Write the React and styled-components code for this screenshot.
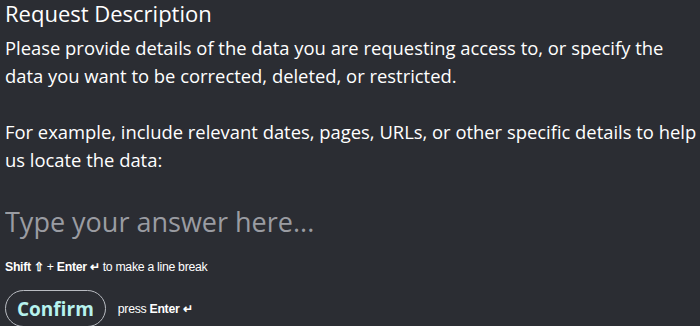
import React from 'react'
import styled, { createGlobalStyle } from 'styled-components'

const GlobalStyle = createGlobalStyle`
  html, body {
    margin: 0;
    padding: 0;
    background-color: #2b2d33;
  }
  body {
    font-family: "Open Sans", "Noto Sans", sans-serif;
    color: #ffffff;
  }
`

const Wrapper = styled.div`
  width: 700px;
  height: 326px;
  overflow: hidden;
  padding: 0 5px;
  box-sizing: border-box;
`

const Title = styled.h2`
  margin: 0;
  font-size: 22px;
  font-weight: 400;
  line-height: 26px;
`

const Description = styled.p`
  margin: 8px 0 0;
  font-size: 18.4px;
  line-height: 28px;
  white-space: nowrap;
`

const AnswerInput = styled.input`
  display: block;
  width: 100%;
  margin-top: 30px;
  padding: 0;
  border: none;
  background: transparent;
  outline: none;
  font-family: inherit;
  font-size: 27px;
  line-height: 36px;
  height: 36px;
  color: #fff;
  &::placeholder {
    color: #9a9ca2;
  }
`

const Hint = styled.div`
  margin-top: 20px;
  font-family: "Liberation Sans", Arial, sans-serif;
  font-size: 12.3px;
  line-height: 14px;
  letter-spacing: -0.3px;
  color: #ffffff;
  b {
    font-weight: 700;
  }
`

const Actions = styled.div`
  display: flex;
  align-items: center;
  gap: 12px;
  margin-top: 16px;
`

const ConfirmButton = styled.button`
  height: 37px;
  padding: 0 11px;
  border: 1px solid #b9bcc2;
  border-radius: 19px;
  background: transparent;
  color: #b6f2ee;
  font-family: "Open Sans", sans-serif;
  font-weight: 700;
  font-size: 19px;
  cursor: pointer;
`

const PressEnter = styled.span`
  font-family: "Liberation Sans", Arial, sans-serif;
  font-size: 12.3px;
  letter-spacing: -0.3px;
  b {
    font-weight: 700;
  }
`

const App = () => {
  return (
    <Wrapper>
      <GlobalStyle />
      <Title>Request Description</Title>
      <Description>
        Please provide details of the data you are requesting access to, or specify the
        <br />
        data you want to be corrected, deleted, or restricted.
        <br />
        <br />
        For example, include relevant dates, pages, URLs, or other specific details to help
        <br />
        us locate the data:
      </Description>
      <AnswerInput type='text' placeholder='Type your answer here...' />
      <Hint>
        <b>Shift ⇧</b> + <b>Enter ↵</b> to make a line break
      </Hint>
      <Actions>
        <ConfirmButton>Confirm</ConfirmButton>
        <PressEnter>press <b>Enter ↵</b></PressEnter>
      </Actions>
    </Wrapper>
  )
}

export default App
